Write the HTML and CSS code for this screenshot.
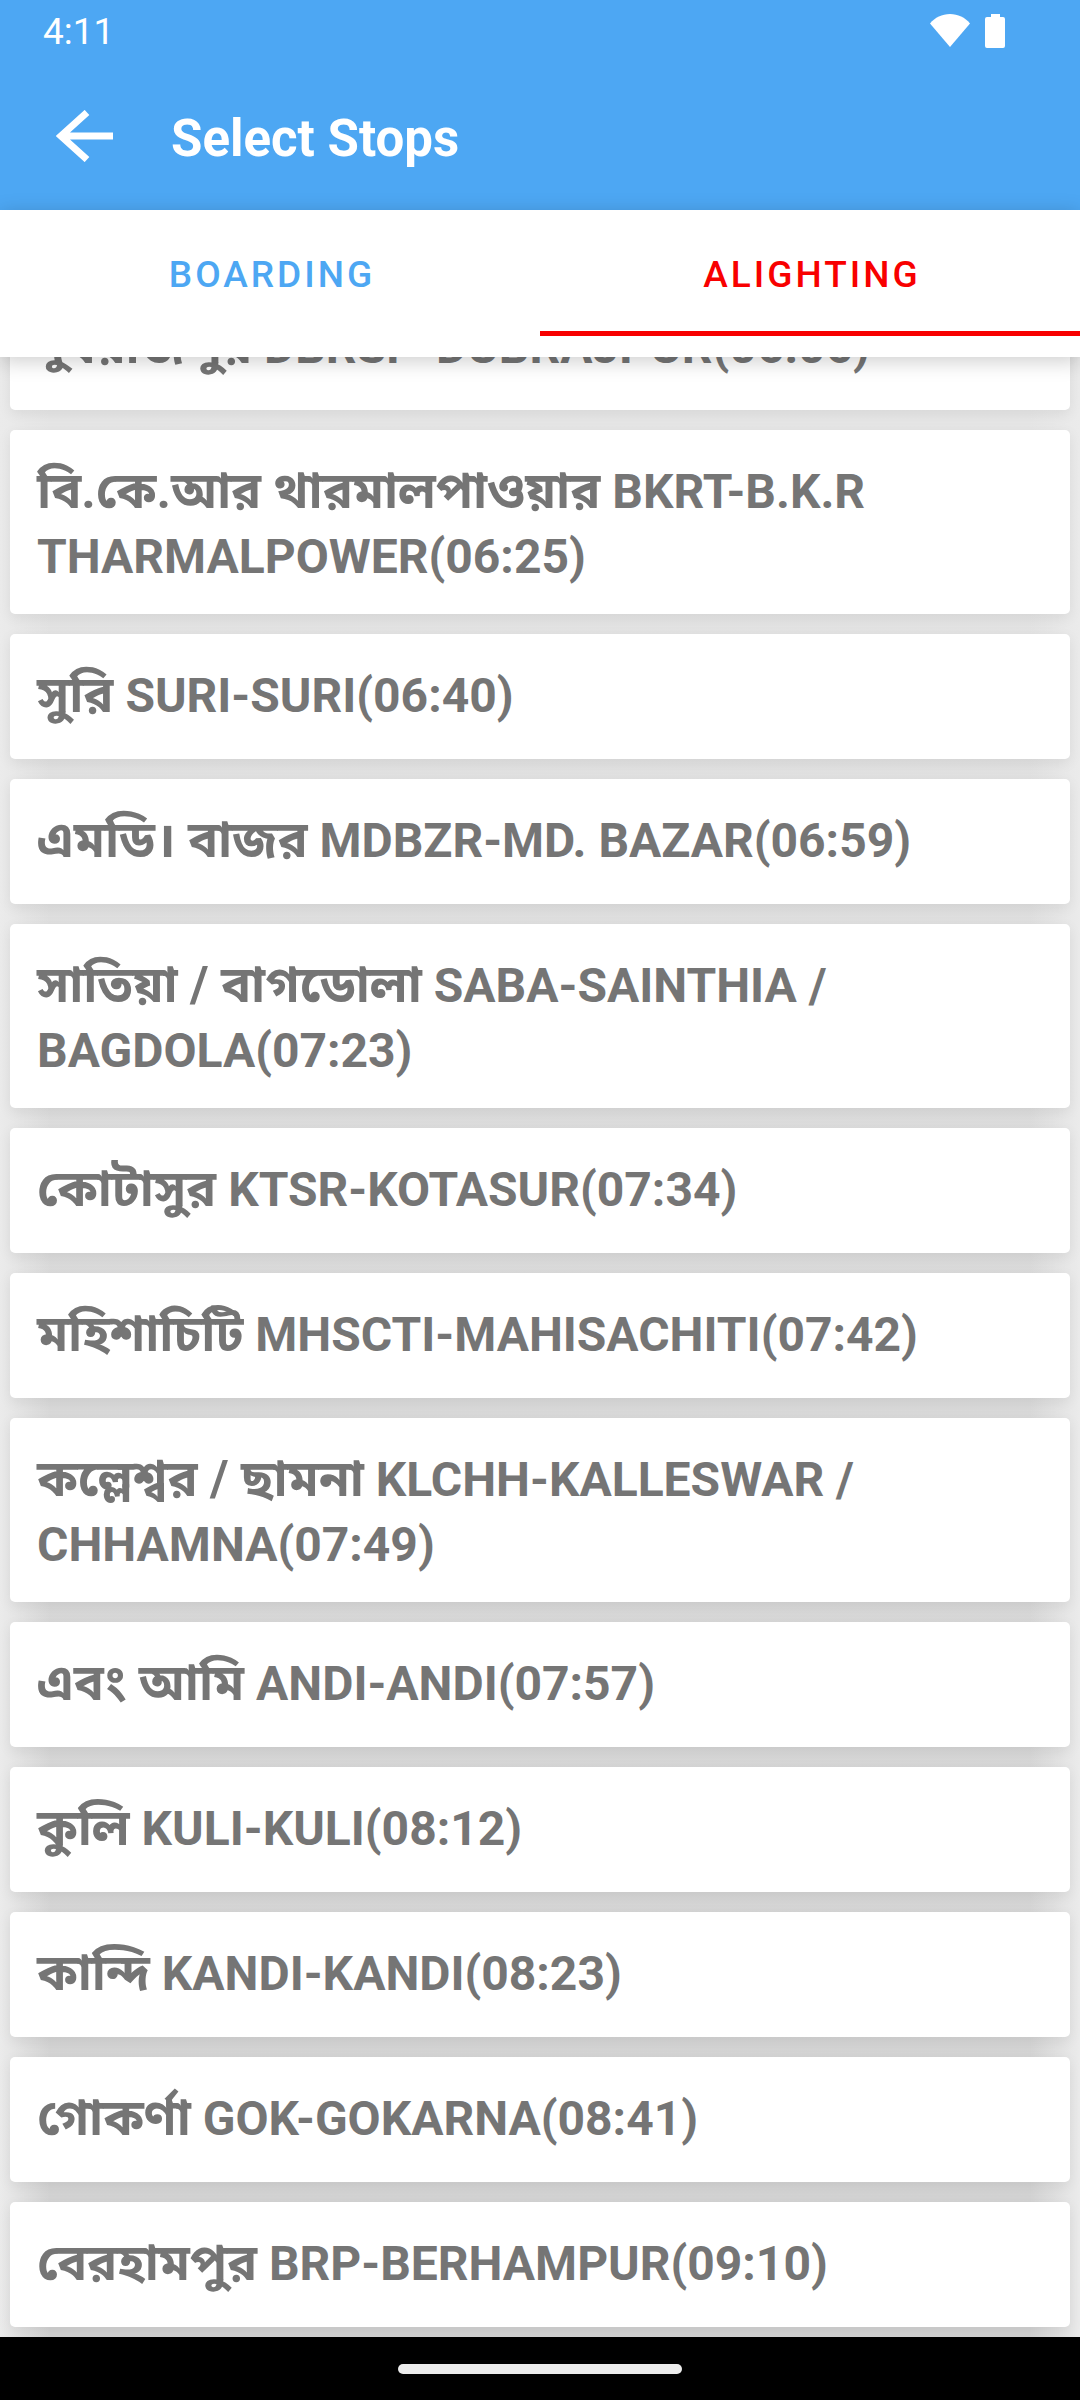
FILE: index.html
```html
<!DOCTYPE html>
<html lang="en">
<head>
<meta charset="UTF-8">
<meta name="viewport" content="width=device-width, initial-scale=1.0">
<title>Select Stops</title>
<link rel="stylesheet" href="styles.css">
</head>
<body>
<header class="top">
  <div class="status-bar">
    <span class="time">4:11</span>
    <div class="status-icons">
      <svg width="40" height="34" viewBox="0 0 40 34"><path d="M0 9.500C5 3.500 12 0 20 0s15 3.500 20 9.500L20 33z" fill="#fff"/></svg>
      <svg width="20" height="34" viewBox="0 0 20 34"><path d="M6 0h9v3h3a2 2 0 0 1 2 2v27a2 2 0 0 1-2 2H2a2 2 0 0 1-2-2V5a2 2 0 0 1 2-2h4z" fill="#fff"/></svg>
    </div>
  </div>
  <div class="app-bar">
    <button class="back" aria-label="Back">
      <svg width="58" height="52" viewBox="0 0 58 52" fill="none" stroke="#fff" stroke-width="7"><path d="M57 26H5M31 2.500L5 26l26 23.500"/></svg>
    </button>
    <h1>Select Stops</h1>
  </div>
</header>

<nav class="tabs">
  <button class="tab">BOARDING</button>
  <button class="tab active">ALIGHTING</button>
</nav>

<main class="stops-wrap">
  <ul class="stops">
    <li class="stop"><span lang="bn">দুবরাজপুর</span> DBRSP-DUBRAJPUR(06:06)</li>
    <li class="stop"><span lang="bn">বি.কে.আর থারমালপাওয়ার</span> BKRT-B.K.R THARMALPOWER(06:25)</li>
    <li class="stop"><span lang="bn">সুরি</span> SURI-SURI(06:40)</li>
    <li class="stop"><span lang="bn">এমডি। বাজর</span> MDBZR-MD. BAZAR(06:59)</li>
    <li class="stop"><span lang="bn">সাতিয়া / বাগডোলা</span> SABA-SAINTHIA / BAGDOLA(07:23)</li>
    <li class="stop"><span lang="bn">কোটাসুর</span> KTSR-KOTASUR(07:34)</li>
    <li class="stop"><span lang="bn">মহিশাচিটি</span> MHSCTI-MAHISACHITI(07:42)</li>
    <li class="stop"><span lang="bn">কল্লেশ্বর / ছামনা</span> KLCHH-KALLESWAR / CHHAMNA(07:49)</li>
    <li class="stop"><span lang="bn">এবং আমি</span> ANDI-ANDI(07:57)</li>
    <li class="stop"><span lang="bn">কুলি</span> KULI-KULI(08:12)</li>
    <li class="stop"><span lang="bn">কান্দি</span> KANDI-KANDI(08:23)</li>
    <li class="stop"><span lang="bn">গোকর্ণা</span> GOK-GOKARNA(08:41)</li>
    <li class="stop"><span lang="bn">বেরহামপুর</span> BRP-BERHAMPUR(09:10)</li>
  </ul>
</main>

<footer class="nav-bar"><span class="pill"></span></footer>
</body>
</html>
```

FILE: styles.css
```css
* {
  box-sizing: border-box;
}

body {
  margin: 0;
  height: 100vh;
  display: flex;
  flex-direction: column;
  overflow: hidden;
  font-family: Roboto, "Noto Sans Bengali", "Noto Sans", sans-serif;
  background-color: #fafafa;
}

button {
  border: none;
  background: none;
  font-family: inherit;
  cursor: pointer;
}

.top {
  background-color: #4da7f3;
  color: white;
}

.status-bar {
  height: 62px;
  display: flex;
  justify-content: space-between;
  align-items: center;
  padding: 0 75px 0 43px;
}

.time {
  font-size: 37px;
}

.status-icons {
  display: flex;
  gap: 15px;
}

.status-icons svg,
.back svg {
  display: block;
}

.app-bar {
  height: 148px;
  display: flex;
  align-items: center;
  gap: 57px;
  padding: 0 56px;
}

.back {
  padding: 0;
}

h1 {
  margin: 0;
  padding-top: 4px;
  font-size: 51px;
  font-weight: bold;
}

.tabs {
  position: relative;
  z-index: 1;
  display: flex;
  padding-bottom: 21px;
  background-color: white;
  box-shadow: 0 4px 20px rgba(0, 0, 0, 0.2);
}

.tab {
  flex: 1;
  height: 126px;
  padding: 8px 0 0 4px;
  border-bottom: 5px solid transparent;
  color: #4da7f3;
  font-size: 37px;
  font-weight: 500;
  letter-spacing: 3px;
}

.tab.active {
  color: #f80000;
  border-bottom-color: #f80000;
}

/* the list is scrolled down to its last stop */
.stops-wrap {
  flex: 1;
  min-height: 0;
  display: flex;
  flex-direction: column;
  justify-content: flex-end;
  overflow: hidden;
}

.stops {
  list-style: none;
  margin: 0;
  padding: 10px;
  display: flex;
  flex-direction: column;
  gap: 20px;
  background:
    linear-gradient(to right, #ebebeb, rgba(235, 235, 235, 0) 50px, rgba(235, 235, 235, 0) calc(100% - 50px), #ebebeb),
    linear-gradient(#e8e8e8, #dadada 50%, #d2d2d2);
}

.stop {
  min-height: 125px;
  padding: 29px 27px 25px;
  border-radius: 5px;
  background-color: white;
  box-shadow: 0 4px 14px rgba(0, 0, 0, 0.07);
  color: #757575;
  font-size: 48px;
  font-weight: bold;
  line-height: 65px;
}

.stop span {
  font-size: 50px;
  line-height: 1;
}

.nav-bar {
  height: 63px;
  display: flex;
  justify-content: center;
  align-items: center;
  background-color: black;
}

.pill {
  width: 284px;
  height: 10px;
  border-radius: 5px;
  background-color: #ececec;
}
```
